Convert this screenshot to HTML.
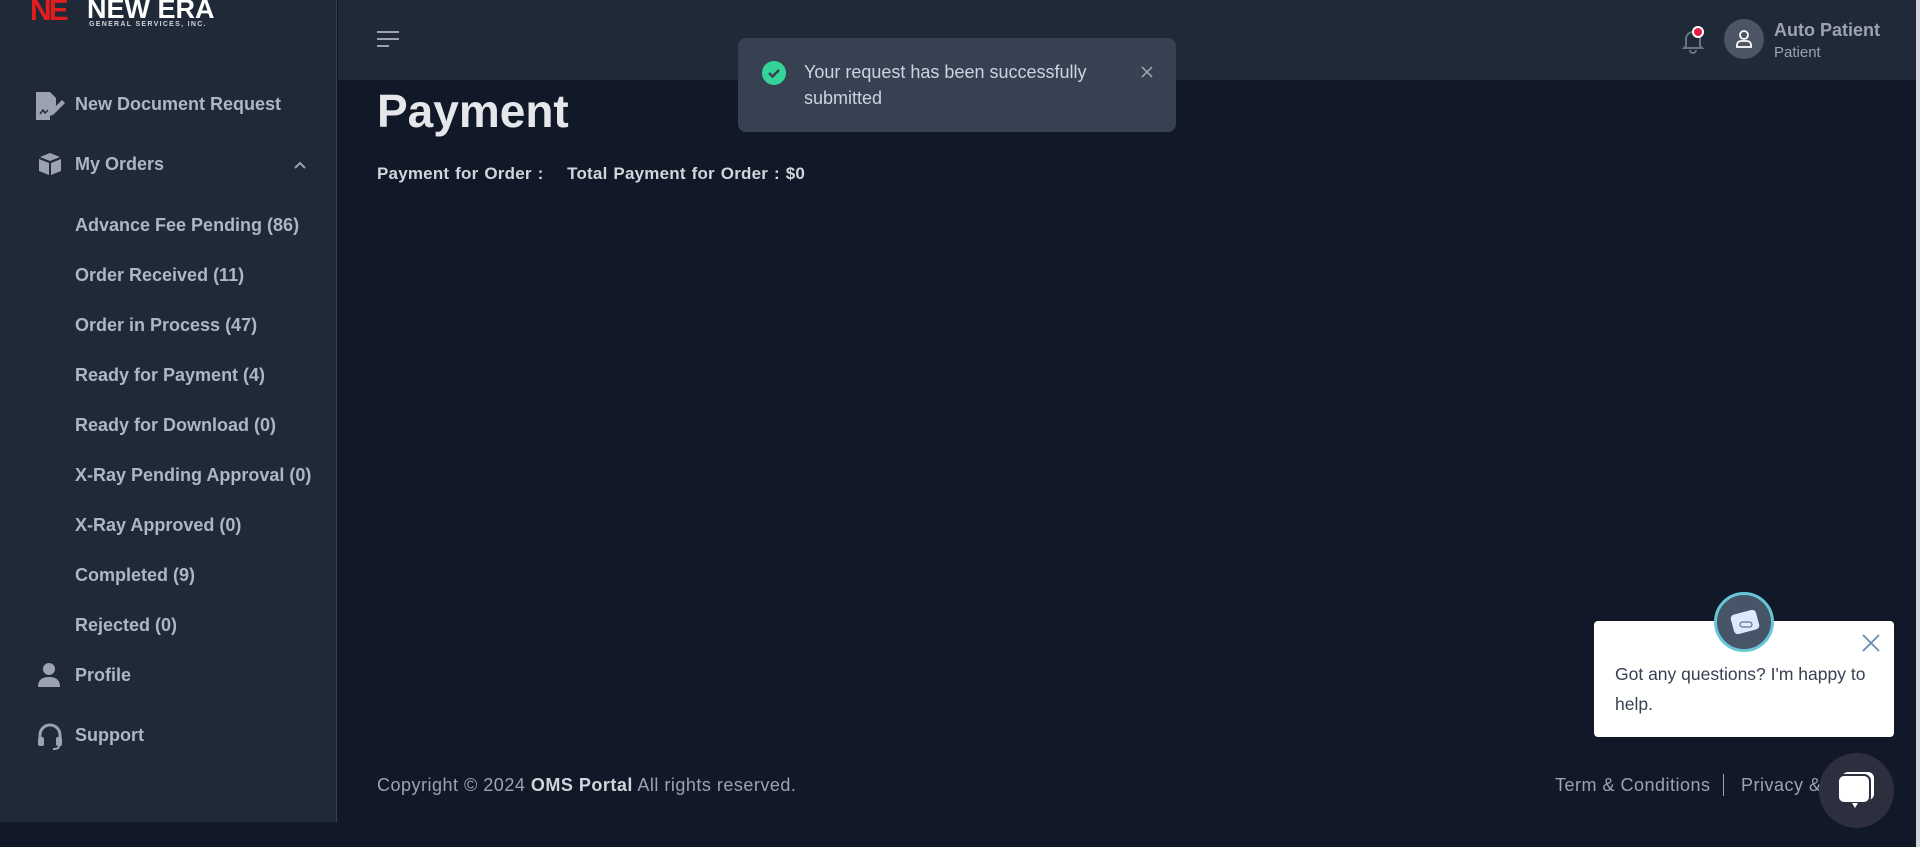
<!DOCTYPE html>
<html><head><meta charset="utf-8"><style>
*{margin:0;padding:0;box-sizing:border-box}
body{width:1920px;height:847px;overflow:hidden;background:#111827;font-family:"Liberation Sans",sans-serif;position:relative}
.side{position:absolute;left:0;top:0;width:337px;height:822px;background:#1f2937;border-right:1px solid #374151}
.hdr{position:absolute;left:338px;top:0;width:1578px;height:80px;background:#1f2937}
.sb{position:absolute;right:0;top:0;width:4px;height:847px;background:#d1d5db}
.item{position:absolute;left:75px;font-size:18px;font-weight:bold;color:#aeb6c2;line-height:20px}
.ico{position:absolute;left:36px}
.abs{position:absolute}
.ft{font:18px 'Liberation Sans';letter-spacing:0.5px;color:#9ca3af}
</style></head><body>
<div class="side">
  <div class="abs" style="left:30px;top:-6px;font:bold 30px 'Liberation Sans';color:#e11d1d;letter-spacing:-3px">NE</div>
  <div class="abs" style="left:87px;top:-6px;font:bold 27px 'Liberation Sans';color:#fff">NEW ERA</div>
  <div class="abs" style="left:89px;top:21px;font:bold 7px 'Liberation Sans';color:#d1d5db;letter-spacing:1.3px">GENERAL SERVICES, INC.</div>

  <svg class="ico" style="top:92px" width="30" height="28" viewBox="0 0 30 28"><path d="M0 0h14l6 6v8l-6 8v6H0z" fill="#9ca3af"/><path d="M4 22l3-4 2 3 3-3" stroke="#1f2937" stroke-width="1.5" fill="none"/><path d="M14 20l12-12 3 3-12 12-4 1z" fill="#9ca3af"/></svg>
  <div class="item" style="top:94px">New Document Request</div>
  <svg class="ico" style="top:152px;left:38px" width="24" height="24" viewBox="0 0 24 24"><path d="M12 1l10 4-10 4L2 5z M1 7l10 4v12L1 19z M13 11l10-4v12l-10 4z" fill="#9ca3af"/></svg>
  <div class="item" style="top:154px">My Orders</div>
  <svg class="abs" style="left:293px;top:160px" width="14" height="10" viewBox="0 0 14 10"><path d="M2 8l5-5 5 5" stroke="#9ca3af" stroke-width="2" fill="none"/></svg>
  <div class="item" style="top:215px">Advance Fee Pending (86)</div>
  <div class="item" style="top:265px">Order Received (11)</div>
  <div class="item" style="top:315px">Order in Process (47)</div>
  <div class="item" style="top:365px">Ready for Payment (4)</div>
  <div class="item" style="top:415px">Ready for Download (0)</div>
  <div class="item" style="top:465px">X-Ray Pending Approval (0)</div>
  <div class="item" style="top:515px">X-Ray Approved (0)</div>
  <div class="item" style="top:565px">Completed (9)</div>
  <div class="item" style="top:615px">Rejected (0)</div>
  <svg class="ico" style="top:663px;left:38px" width="22" height="24" viewBox="0 0 22 24"><circle cx="11" cy="6" r="6" fill="#9ca3af"/><path d="M0 24c0-8 5-10 11-10s11 2 11 10z" fill="#9ca3af"/></svg>
  <div class="item" style="top:665px">Profile</div>
  <svg class="ico" style="top:722px" width="28" height="28" viewBox="0 0 28 28"><path d="M4 16v-3a10 10 0 0120 0v3" stroke="#9ca3af" stroke-width="3" fill="none"/><rect x="2" y="15" width="6" height="9" rx="2" fill="#9ca3af"/><rect x="20" y="15" width="6" height="9" rx="2" fill="#9ca3af"/><path d="M23 24q0 3-6 3" stroke="#9ca3af" stroke-width="2" fill="none"/></svg>
  <div class="item" style="top:725px">Support</div>
</div>
<div class="hdr">
  <svg class="abs" style="left:38px;top:30px" width="24" height="20"><path d="M1 2h22M1 9h22M1 16h12" stroke="#9ca3af" stroke-width="2"/></svg>
  <svg class="abs" style="left:1341px;top:26px" width="28" height="28" viewBox="0 0 28 28"><path d="M7 20V13a7 7 0 0114 0v7l2 2H5z" stroke="#6b7280" stroke-width="2" fill="none"/><path d="M11 24a3 3 0 006 0" stroke="#6b7280" stroke-width="2" fill="none"/><circle cx="19" cy="6" r="6" fill="#fff"/><circle cx="19" cy="6" r="4" fill="#e11d48"/></svg>
  <div class="abs" style="left:1386px;top:19px;width:40px;height:40px;border-radius:50%;background:#4b5563"></div>
  <svg class="abs" style="left:1397px;top:29px" width="18" height="20" viewBox="0 0 18 20"><circle cx="9" cy="6" r="4" stroke="#fff" stroke-width="1.8" fill="none"/><path d="M2 18v-2a4 4 0 014-4h6a4 4 0 014 4v2z" stroke="#fff" stroke-width="1.8" fill="none"/></svg>
  <div class="abs" style="left:1436px;top:20px;font:bold 18px 'Liberation Sans';color:#9ca3af">Auto Patient</div>
  <div class="abs" style="left:1436px;top:44px;font:15px 'Liberation Sans';color:#9ca3af">Patient</div>
</div>
<div class="abs" style="left:377px;top:84px;font:bold 46px 'Liberation Sans';color:#e5e7eb">Payment</div>
<div class="abs" style="left:377px;top:164px;font:bold 17px 'Liberation Sans';color:#d1d5db;word-spacing:1px;letter-spacing:0.2px">Payment for Order :&nbsp;&nbsp;&nbsp;&nbsp;Total Payment for Order : $0</div>

<div class="abs" style="left:738px;top:38px;width:438px;height:94px;background:#374151;border-radius:8px"></div>
<svg class="abs" style="left:762px;top:61px" width="24" height="24"><circle cx="12" cy="12" r="12" fill="#34d399"/><path d="M7 12l3.5 3.5L17 9" stroke="#374151" stroke-width="2.5" fill="none"/></svg>
<div class="abs" style="left:804px;top:59px;font:18px/26px 'Liberation Sans';color:#cbd5e1">Your request has been successfully<br>submitted</div>
<svg class="abs" style="left:1141px;top:66px" width="12" height="12"><path d="M1 1l10 10M11 1L1 11" stroke="#9ca3af" stroke-width="1.6"/></svg>

<div class="abs ft" style="left:377px;top:775px">Copyright © 2024 <b style="color:#d1d5db">OMS Portal</b> All rights reserved.</div>
<div class="abs ft" style="left:1555px;top:775px">Term &amp; Conditions</div>
<div class="abs" style="left:1723px;top:774px;width:1px;height:22px;background:#9ca3af"></div>
<div class="abs ft" style="left:1741px;top:775px">Privacy &amp;</div>

<div class="abs" style="left:1594px;top:621px;width:300px;height:116px;background:#fff;border-radius:4px"></div>
<div class="abs" style="left:1714px;top:592px;width:60px;height:60px;border-radius:50%;background:#475569;border:3px solid #67c7d6"></div>
<svg class="abs" style="left:1730px;top:610px" width="32" height="26"><rect x="2" y="2" width="26" height="20" rx="4" fill="#dbeafe" transform="rotate(-15 15 12)"/><rect x="10" y="12" width="12" height="5" rx="2.5" fill="none" stroke="#475569"/></svg>
<svg class="abs" style="left:1862px;top:634px" width="18" height="18"><path d="M1 1l16 16M17 1L1 17" stroke="#6b8bb0" stroke-width="1.8"/></svg>
<div class="abs" style="left:1615px;top:659px;font:17.5px/30px 'Liberation Sans';color:#374151">Got any questions? I'm happy to<br>help.</div>
<div class="abs" style="left:1819px;top:753px;width:75px;height:75px;border-radius:50%;background:#2d2f3e"></div>
<svg class="abs" style="left:1836px;top:772px" width="40" height="38" viewBox="0 0 40 38"><rect x="6" y="0" width="32" height="28" rx="6" fill="#fff"/><rect x="2" y="3" width="32" height="28" rx="6" fill="#fff" stroke="#2d2f3e" stroke-width="2"/><path d="M16 31l3 5 3-5z" fill="#fff"/></svg>
<div class="sb"></div>
</body></html>
